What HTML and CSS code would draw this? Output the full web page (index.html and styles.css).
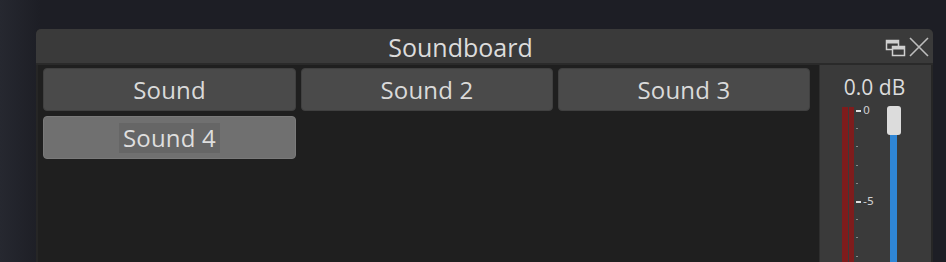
FILE: index.html
```html
<!DOCTYPE html>
<html>
<head>
<meta charset="utf-8">
<link rel="stylesheet" href="styles.css">
</head>
<body>
<div class="window">
  <div class="titlebar">
    <span class="title">Soundboard</span>
    <div class="controls">
      <svg class="ico" width="22" height="22" viewBox="0 0 22 22">
        <rect x="1.5" y="4.5" width="12" height="9" fill="none" stroke="#d0d0d0" stroke-width="1.5"/>
        <rect x="1.5" y="4.5" width="12" height="3" fill="#d0d0d0"/>
        <rect x="7.5" y="10.5" width="12" height="9" fill="#3a3a3a" stroke="#d0d0d0" stroke-width="1.5"/>
        <rect x="7.5" y="10.5" width="12" height="3" fill="#d0d0d0"/>
      </svg>
      <svg class="ico" width="22" height="22" viewBox="0 0 22 22">
        <path d="M2 2 L20 20 M20 2 L2 20" stroke="#bdbdbd" stroke-width="1.6" fill="none"/>
      </svg>
    </div>
  </div>
  <div class="body">
    <div class="grid">
      <button class="btn">Sound</button>
      <button class="btn">Sound 2</button>
      <button class="btn">Sound 3</button>
      <button class="btn active"><span class="focus">Sound 4</span></button>
    </div>
    <div class="panel">
      <div class="db">0.0 dB</div>
      <div class="meter">
        <div class="bars"><div class="bar"></div><div class="bar"></div></div>
        <div class="scale">
          <div class="tick major"><span>0</span></div>
          <div class="tick"></div>
          <div class="tick"></div>
          <div class="tick"></div>
          <div class="tick"></div>
          <div class="tick major"><span>-5</span></div>
          <div class="tick"></div>
          <div class="tick"></div>
          <div class="tick"></div>
        </div>
        <div class="slider">
          <div class="handle"></div>
          <div class="track"></div>
        </div>
      </div>
    </div>
  </div>
</div>
</body>
</html>
```
FILE: styles.css
```css
html, body {
  margin: 0;
  height: 100%;
}
body {
  background: linear-gradient(90deg, #262830 0px, #1d1e25 40px, #1d1e25 100%);
  font-family: "Open Sans", "Noto Sans", sans-serif;
  overflow: hidden;
}
.window {
  margin: 29px 0 0 36px;
  width: 897px;
  height: 240px;
  background: #262626;
  border-radius: 5px 5px 0 0;
  display: flex;
  flex-direction: column;
}
.titlebar {
  height: 34px;
  background: #3a3a3a;
  border-radius: 5px 5px 0 0;
  display: flex;
  align-items: center;
  border-bottom: 2px solid #2a2a2a;
  flex: none;
  padding-right: 3px;
}
.title {
  flex: 1;
  text-align: center;
  color: #dcdcdc;
  font-size: 25px;
  line-height: 30px;
  margin-top: 1px;
}
.controls {
  display: flex;
  gap: 1px;
  margin-top: 1px;
}
.body {
  flex: 1;
  display: flex;
  background: #1f1f1f;
  margin: 0 2px 0 2px;
}
.grid {
  display: grid;
  grid-template-columns: 253px 252px 252px;
  grid-auto-rows: 43px;
  gap: 5px;
  padding: 3px 0 0 5px;
  align-content: start;
}
.btn {
  background: #4a4a4a;
  border: 1px solid #404040;
  border-radius: 4px;
  color: #dadada;
  font-family: inherit;
  font-size: 24px;
  letter-spacing: 0.2px;
  padding: 0;
  display: flex;
  align-items: center;
  justify-content: center;
}
.btn.active {
  background: #707070;
  border-color: #7a7a7a;
}
.focus {
  background: #666;
  padding: 0 4px;
  line-height: 30px;
  color: #dedede;
}
.panel {
  margin-left: 9px;
  width: 111px;
  background: #3a3a3a;
  border-left: 1px solid #2e2e2e;
  display: flex;
  flex-direction: column;
  align-items: center;
}
.db {
  color: #dcdcdc;
  font-size: 21px;
  margin-top: 10px;
  line-height: 24px;
  margin-right: 2px;
}
.meter {
  display: flex;
  width: 100%;
  margin-top: 8px;
  flex: 1;
}
.bars {
  margin-left: 22px;
  display: flex;
  gap: 1px;
}
.bar {
  width: 6px;
  background: #7e1c1c;
}
.bar + .bar {
  width: 5px;
}
.scale {
  width: 30px;
  padding-top: 3px;
  margin-left: 2px;
}
.tick {
  height: 18.2px;
  position: relative;
}
.tick::before {
  content: "";
  position: absolute;
  left: 0;
  top: 0;
  width: 2px;
  height: 1px;
  background: #888;
}
.tick.major::before {
  width: 5px;
  height: 2px;
  background: #e0e0e0;
}
.tick span {
  position: absolute;
  left: 7px;
  top: -6px;
  font-size: 11px;
  color: #cfcfcf;
  font-family: "DejaVu Sans", sans-serif;
}
.slider {
  width: 15px;
  display: flex;
  flex-direction: column;
  align-items: center;
}
.handle {
  width: 14px;
  height: 29px;
  background: #dcdcdc;
  border-radius: 3px;
  margin-top: -1px;
}
.track {
  width: 7px;
  flex: 1;
  background: #2f86d6;
}
```
